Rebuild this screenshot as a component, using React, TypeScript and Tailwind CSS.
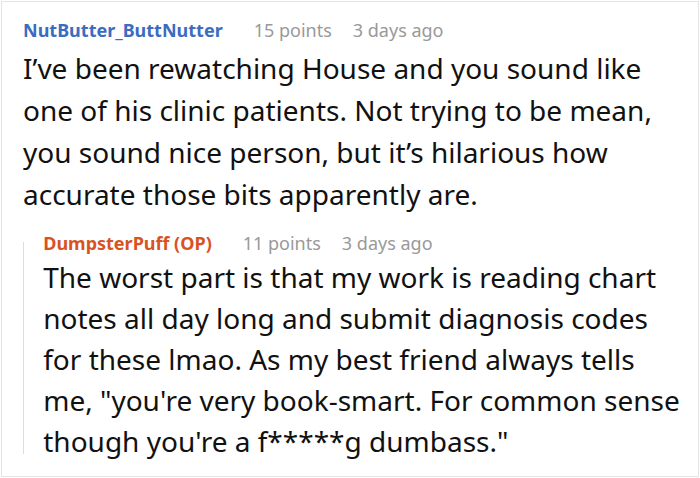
import React from "react";

interface CommentProps {
  author: string;
  authorColor: string;
  points: number;
  age: string;
  body: string;
  bodyClass?: string;
}

const Comment: React.FC<CommentProps> = ({ author, authorColor, points, age, body, bodyClass = "mt-[3px] leading-[42px]" }) => {
  return (
    <div className="flex flex-col">
      <div className="flex flex-row items-baseline text-[18px] leading-[27px]">
        <span className={`font-bold ${authorColor}`}>{author}</span>
        <span className="ml-[31px] text-[#999999]">{points} points</span>
        <span className="ml-[21px] text-[#999999]">{age}</span>
      </div>
      <p className={`${bodyClass} text-[28px] text-[#111111]`}>{body}</p>
    </div>
  );
};

export default function App() {
  return (
    <div className="w-[700px] h-[478px] bg-white p-px" style={{ fontFamily: '"Noto Sans", "Open Sans", sans-serif' }}>
      <div className="h-[476px] border border-[#e4e4e4] pl-[21px] pr-4 pt-[15px]">
        <Comment
          author="NutButter_ButtNutter"
          authorColor="text-[#3a6cc0]"
          points={15}
          age="3 days ago"
          body="I’ve been rewatching House and you sound like one of his clinic patients. Not trying to be mean, you sound nice person, but it’s hilarious how accurate those bits apparently are."
        />
        <div className="mt-[15px] flex flex-row">
          <div className="w-px mt-[12px] mb-[8px] bg-[#dddddd]" />
          <div className="pl-5">
            <Comment
              author="DumpsterPuff (OP)"
              authorColor="text-[#d8531f]"
              points={11}
              age="3 days ago"
              bodyClass="mt-0 leading-[41px]"
              body={'The worst part is that my work is reading chart notes all day long and submit diagnosis codes for these lmao. As my best friend always tells me, "you\'re very book-smart. For common sense though you\'re a f*****g dumbass."'}
            />
          </div>
        </div>
      </div>
    </div>
  );
}
